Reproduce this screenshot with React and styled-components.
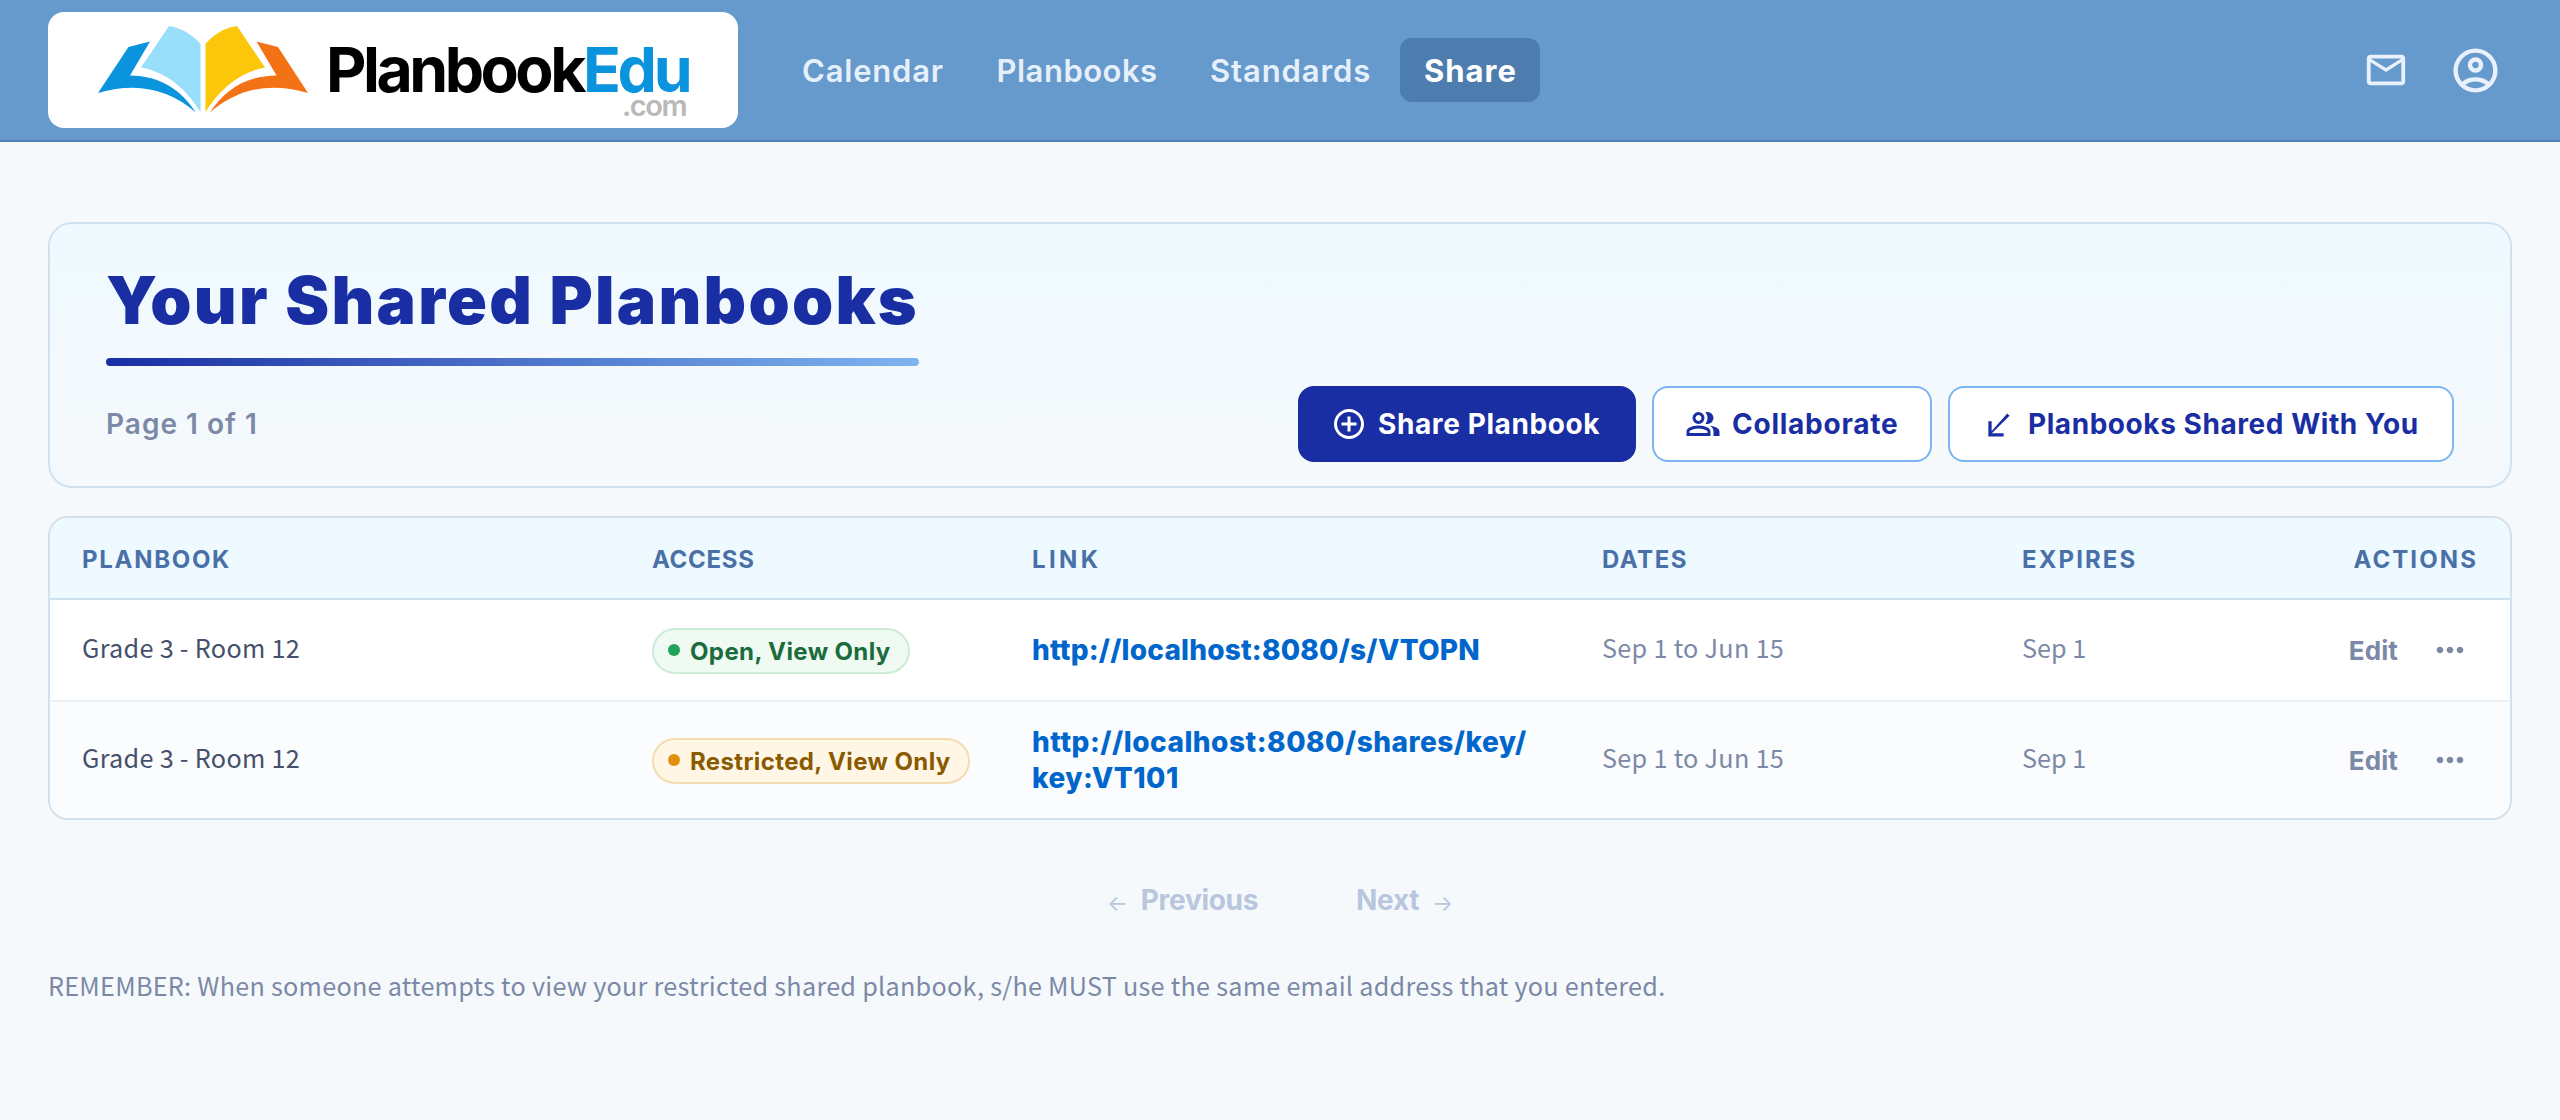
import React from 'react';
import styled, { createGlobalStyle } from 'styled-components';

const GlobalStyle = createGlobalStyle`
  * {
    box-sizing: border-box;
  }
  body {
    margin: 0;
    background-color: #f5f9fc;
    font-family: 'Noto Sans CJK SC', 'Noto Sans', sans-serif;
    color: #45506b;
  }
  a {
    text-decoration: none;
    color: inherit;
  }
  button {
    font-family: inherit;
    border: none;
    background: none;
    padding: 0;
  }
`;

const headingFont = "'Inter', 'Liberation Sans', sans-serif";

const HeaderStyles = styled.header`
  display: flex;
  align-items: center;
  height: 142px;
  padding: 0 48px;
  background-color: #6699cc;
  border-bottom: 2px solid #4f80b3;
  .logo {
    display: flex;
    width: 690px;
    height: 116px;
    background-color: #fff;
    border-radius: 16px;
  }
  nav {
    display: flex;
    gap: 4px;
    flex: 1;
    margin-left: 40px;
  }
  .header__icons {
    display: flex;
    align-items: center;
    gap: 40px;
    margin-right: 10px;
    color: #e9f2fc;
  }
`;

const NavLink = styled.a`
  display: flex;
  align-items: center;
  width: ${({ $width }) => $width}px;
  height: 64px;
  padding-left: 24px;
  border-radius: 12px;
  font-family: ${headingFont};
  font-size: 31px;
  font-weight: ${({ $active }) => ($active ? 700 : 600)};
  letter-spacing: ${({ $space }) => $space || 0}px;
  color: ${({ $active }) => ($active ? '#fff' : '#e6f0fb')};
  background-color: ${({ $active }) => ($active ? '#4d7dae' : 'transparent')};
`;

const PageStyles = styled.main`
  padding: 80px 48px 0;
`;

const TitlePanel = styled.section`
  height: 266px;
  padding: 38px 56px 0;
  border: 2px solid #d0e1f0;
  border-radius: 24px;
  background: linear-gradient(180deg, #edfaff 0%, #f3f9fd 50%, #f5f9fc 100%);
  h1 {
    display: inline-block;
    margin: 0;
    height: 104px;
    font-family: ${headingFont};
    font-size: 66px;
    line-height: 76px;
    font-weight: 900;
    letter-spacing: 2.25px;
    color: #1a2ea3;
    white-space: nowrap;
  }
  h1::after {
    content: '';
    display: block;
    height: 8px;
    margin-top: 20px;
    border-radius: 4px;
    background: linear-gradient(90deg, #1a2ea3, #7db5f0);
  }
  .title__row {
    display: flex;
    align-items: center;
    justify-content: space-between;
    margin-top: 20px;
  }
  .title__page {
    font-family: ${headingFont};
    font-size: 28px;
    font-weight: 600;
    letter-spacing: 1px;
    color: #7c89a6;
  }
  .title__buttons {
    display: flex;
    gap: 16px;
  }
`;

const Button = styled.button`
  display: flex;
  align-items: center;
  gap: 11px;
  width: ${({ $width }) => $width}px;
  height: 76px;
  padding-left: 31px;
  border: 2px solid ${({ $primary }) => ($primary ? '#1a2ea3' : '#7db5f0')};
  border-radius: 16px;
  font-family: ${headingFont};
  font-size: 28px;
  font-weight: 700;
  letter-spacing: ${({ $space }) => $space || 0}px;
  white-space: nowrap;
  color: ${({ $primary }) => ($primary ? '#fff' : '#1a2ea3')};
  background-color: ${({ $primary }) => ($primary ? '#1a2ea3' : '#fff')};
  svg {
    flex-shrink: 0;
  }
`;

const Table = styled.div`
  margin-top: 28px;
  border: 2px solid #d3e0ed;
  border-radius: 20px;
  overflow: hidden;
`;

const Row = styled.div`
  display: grid;
  grid-template-columns: 570px 380px 570px 420px 320px 1fr;
  align-items: center;
  height: ${({ $height }) => $height}px;
  padding: 0 32px;
  border-bottom: 2px solid #ebf1f6;
  background-color: ${({ $striped }) => ($striped ? '#fafcfe' : '#fff')};
  &:last-child {
    border-bottom: none;
  }
`;

const HeadRow = styled(Row)`
  height: 82px;
  padding-top: 3px;
  border-bottom: 2px solid #cfe0f0;
  background-color: #eefaff;
`;

const HeadCell = styled.span`
  font-family: ${headingFont};
  font-size: 24px;
  font-weight: 700;
  letter-spacing: ${({ $space }) => $space}px;
  text-align: ${({ $right }) => ($right ? 'right' : 'left')};
  color: #4a70a8;
`;

const Cell = styled.span`
  padding-bottom: 6px;
  font-size: 25.2px;
  letter-spacing: ${({ $space = 0.3 }) => $space}px;
  color: ${({ $muted }) => ($muted ? '#7c89a6' : '#45506b')};
`;

const AccessCell = styled.div`
  display: flex;
  padding-top: 2px;
`;

const Badge = styled.span`
  display: flex;
  align-items: center;
  gap: 10px;
  height: 46px;
  width: ${({ $width }) => $width}px;
  padding-left: 14px;
  border: 2px solid ${({ $open }) => ($open ? '#cdebd7' : '#f3ddb0')};
  border-radius: 23px;
  font-family: ${headingFont};
  font-size: 24px;
  font-weight: 700;
  letter-spacing: 0.38px;
  white-space: nowrap;
  color: ${({ $open }) => ($open ? '#1b6b3c' : '#8a5a00')};
  background-color: ${({ $open }) => ($open ? '#eefaf2' : '#fff6e5')};
  &::before {
    content: '';
    width: 12px;
    height: 12px;
    margin-bottom: 2px;
    border-radius: 50%;
    background-color: ${({ $open }) => ($open ? '#22a35a' : '#e0900c')};
  }
`;

const ShareLink = styled.a`
  font-family: ${headingFont};
  font-size: 28px;
  line-height: 36.4px;
  font-weight: 800;
  letter-spacing: ${({ $space }) => $space}px;
  color: #0066cc;
`;

const Actions = styled.div`
  display: flex;
  align-items: center;
  justify-content: flex-end;
  gap: 32px;
  padding-right: 8px;
  font-family: ${headingFont};
  font-size: 26px;
  font-weight: 700;
  letter-spacing: 0.1px;
  color: #7c89a6;
  span {
    padding-top: 1px;
  }
`;

const Pagination = styled.div`
  display: flex;
  justify-content: center;
  gap: 98px;
  margin-top: 60px;
  font-family: ${headingFont};
  font-size: 28px;
  line-height: 40px;
  font-weight: 700;
  letter-spacing: -0.3px;
  color: #b8c6de;
  span {
    display: flex;
    gap: 13px;
  }
  i {
    width: 30px;
    padding-top: 7px;
    font-size: 22px;
    font-style: normal;
    font-weight: 400;
    line-height: 33px;
  }
  span:first-child i {
    text-align: right;
  }
`;

const Reminder = styled.p`
  margin: 45px 0 0;
  font-size: 25.2px;
  line-height: 40px;
  letter-spacing: 0.27px;
  color: #7c89a6;
`;

// Material Symbols outlines share the 960 unit grid
function Symbol({ size, d }) {
  return (
    <svg
      width={size}
      height={size}
      viewBox="0 -960 960 960"
      fill="currentColor"
      aria-hidden="true"
    >
      <path d={d} />
    </svg>
  );
}

const icons = {
  mail: 'M160-160q-33 0-56.5-23.5T80-240v-480q0-33 23.5-56.5T160-800h640q33 0 56.5 23.5T880-720v480q0 33-23.5 56.5T800-160H160Zm320-280L160-640v400h640v-400L480-440Zm0-80 320-200H160l320 200ZM160-640v-80 480-400Z',
  account:
    'M234-276q51-39 114-61.5T480-360q69 0 132 22.5T726-276q35-41 54.5-93T800-480q0-133-93.5-226.5T480-800q-133 0-226.5 93.5T160-480q0 59 19.5 111t54.5 93Zm246-164q-59 0-99.5-40.5T340-580q0-59 40.5-99.5T480-720q59 0 99.5 40.5T620-580q0 59-40.5 99.5T480-440Zm0 360q-83 0-156-31.5T197-197q-54-54-85.5-127T80-480q0-83 31.5-156T197-763q54-54 127-85.5T480-880q83 0 156 31.5T763-763q54 54 85.5 127T880-480q0 83-31.5 156T763-197q-54 54-127 85.5T480-80Zm0-80q53 0 100-15.5t86-44.5q-39-29-86-44.5T480-280q-53 0-100 15.5T294-220q39 29 86 44.5T480-160Zm0-360q26 0 43-17t17-43q0-26-17-43t-43-17q-26 0-43 17t-17 43q0 26 17 43t43 17Z',
  add: 'M440-280h80v-160h160v-80H520v-160h-80v160H280v80h160v160Zm40 200q-83 0-156-31.5T197-197q-54-54-85.5-127T80-480q0-83 31.5-156T197-763q54-54 127-85.5T480-880q83 0 156 31.5T763-763q54 54 85.5 127T880-480q0 83-31.5 156T763-197q-54 54-127 85.5T480-80Zm0-80q134 0 227-93t93-227q0-134-93-227t-227-93q-134 0-227 93t-93 227q0 134 93 227t227 93Z',
  group:
    'M40-160v-112q0-34 17.5-62.5T104-378q62-31 126-46.5T360-440q66 0 130 15.5T616-378q29 15 46.5 43.5T680-272v112H40Zm720 0v-120q0-44-24.5-84.5T666-434q51 6 96 20.5t84 35.5q36 20 55 44.5t19 53.5v120H760ZM360-480q-66 0-113-47t-47-113q0-66 47-113t113-47q66 0 113 47t47 113q0 66-47 113t-113 47Zm400-160q0 66-47 113t-113 47q-11 0-28-2.5t-28-5.5q27-32 41.5-71t14.5-81q0-42-14.5-81T544-792q14-5 28-6.5t28-1.5q66 0 113 47t47 113ZM120-240h480v-32q0-11-5.5-20T580-306q-54-27-109-40.5T360-360q-56 0-111 13.5T140-306q-9 5-14.5 14t-5.5 20v32Zm240-320q33 0 56.5-23.5T440-640q0-33-23.5-56.5T360-720q-33 0-56.5 23.5T280-640q0 33 23.5 56.5T360-560Z',
  received: 'M762-698 290-232h314v88H196v-412h88v264L700-760Z',
  more: 'M240-400q-33 0-56.5-23.5T160-480q0-33 23.5-56.5T240-560q33 0 56.5 23.5T320-480q0 33-23.5 56.5T240-400Zm240 0q-33 0-56.5-23.5T400-480q0-33 23.5-56.5T480-560q33 0 56.5 23.5T560-480q0 33-23.5 56.5T480-400Zm240 0q-33 0-56.5-23.5T640-480q0-33 23.5-56.5T720-560q33 0 56.5 23.5T800-480q0 33-23.5 56.5T720-400Z',
};

const Wordmark = styled.text`
  font-family: ${headingFont};
  font-size: 62.5px;
  font-weight: 700;
  letter-spacing: -3.5px;
  .edu {
    fill: #0a94de;
    letter-spacing: -3.3px;
  }
`;

const DotCom = styled.text`
  font-family: ${headingFont};
  font-size: 29px;
  font-weight: 600;
  letter-spacing: -1.4px;
  fill: #b9b9b9;
`;

function Logo() {
  return (
    <svg width="690" height="116" viewBox="0 0 690 116">
      <path
        fill="#0a94de"
        d="M50 81 80.500 35 102 29.500 82 63.500C113 64 133 78 148 100.500 122 78 90 69 50 81Z"
      />
      <path
        fill="#99defa"
        d="M121 14C134 16 145 23 152.500 32V100C139 78 119 60 93 55.500Z"
      />
      <path
        fill="#fcc70a"
        d="M189 14C175 16 165 23 157.500 32V100C171 78 191 60 217 55.500Z"
      />
      <path
        fill="#f47216"
        d="M260 81 230 35 208.500 29.500 228.500 63.500C197 64 177 78 162 100.500 188 78 220 69 260 81Z"
      />
      <Wordmark x="278" y="80">
        Planbook<tspan className="edu">Edu</tspan>
      </Wordmark>
      <DotCom x="574" y="104">
        .com
      </DotCom>
    </svg>
  );
}

const shares = [
  {
    open: true,
    access: 'Open, View Only',
    badgeWidth: 258,
    link: ['http://localhost:8080/s/VTOPN'],
    linkSpace: 0.2,
    height: 102,
  },
  {
    open: false,
    access: 'Restricted, View Only',
    badgeWidth: 318,
    link: ['http://localhost:8080/shares/key/', 'key:VT101'],
    linkSpace: 0.5,
    height: 116,
  },
];

export default function App() {
  return (
    <>
      <GlobalStyle />
      <HeaderStyles>
        <a className="logo" href="#home">
          <Logo />
        </a>
        <nav>
          <NavLink $width={190.5} $space={0.8}>
            Calendar
          </NavLink>
          <NavLink $width={209.5} $space={0.5}>
            Planbooks
          </NavLink>
          <NavLink $width={210} $space={0.9}>
            Standards
          </NavLink>
          <NavLink $active $width={140} $space={1}>
            Share
          </NavLink>
        </nav>
        <div className="header__icons">
          <Symbol size={46} d={icons.mail} />
          <Symbol size={53} d={icons.account} />
        </div>
      </HeaderStyles>
      <PageStyles>
        <TitlePanel>
          <h1>Your Shared Planbooks</h1>
          <div className="title__row">
            <span className="title__page">Page 1 of 1</span>
            <div className="title__buttons">
              <Button $primary $width={338} $space={0.6}>
                <Symbol size={36} d={icons.add} />
                Share Planbook
              </Button>
              <Button $width={280} $space={0.75}>
                <Symbol size={36} d={icons.group} />
                Collaborate
              </Button>
              <Button $width={506} $space={0.56}>
                <Symbol size={36} d={icons.received} />
                Planbooks Shared With You
              </Button>
            </div>
          </div>
        </TitlePanel>
        <Table>
          <HeadRow>
            <HeadCell $space={1.7}>PLANBOOK</HeadCell>
            <HeadCell $space={0.7}>ACCESS</HeadCell>
            <HeadCell $space={3.4}>LINK</HeadCell>
            <HeadCell $space={1.5}>DATES</HeadCell>
            <HeadCell $space={2.1}>EXPIRES</HeadCell>
            <HeadCell $space={2.1} $right>
              ACTIONS
            </HeadCell>
          </HeadRow>
          {shares.map((share) => (
            <Row key={share.access} $height={share.height} $striped={!share.open}>
              <Cell>Grade 3 - Room 12</Cell>
              <AccessCell>
                <Badge $open={share.open} $width={share.badgeWidth}>
                  {share.access}
                </Badge>
              </AccessCell>
              <ShareLink $space={share.linkSpace}>
                {share.link.map((line) => (
                  <div key={line}>{line}</div>
                ))}
              </ShareLink>
              <Cell $muted>Sep 1 to Jun 15</Cell>
              <Cell $muted $space={0}>
                Sep 1
              </Cell>
              <Actions>
                <span>Edit</span>
                <Symbol size={40} d={icons.more} />
              </Actions>
            </Row>
          ))}
        </Table>
        <Pagination>
          <span>
            <i>←</i> Previous
          </span>
          <span>
            Next <i>→</i>
          </span>
        </Pagination>
        <Reminder>
          REMEMBER: When someone attempts to view your restricted shared
          planbook, s/he MUST use the same email address that you entered.
        </Reminder>
      </PageStyles>
    </>
  );
}
